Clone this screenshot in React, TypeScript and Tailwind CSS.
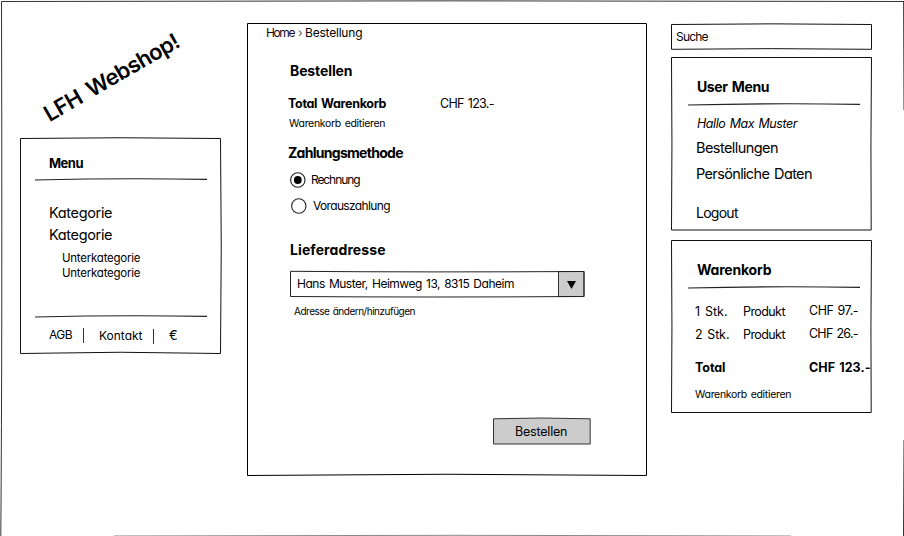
import { useLayoutEffect, useRef, useState } from "react";
import type { ReactNode } from "react";

/** Text whose letter spacing is adjusted so that it spans exactly `width` pixels. */
function Text({ width, className = "", children }: { width: number; className?: string; children: string }) {
  const ref = useRef<HTMLSpanElement>(null);
  const [spacing, setSpacing] = useState(0);
  useLayoutEffect(() => {
    if (ref.current) {
      const gaps = Math.max(children.length - 1, 1);
      setSpacing((width + 0.5 - ref.current.getBoundingClientRect().width) / gaps);
    }
  }, []);
  return (
    <span className={`block h-5 whitespace-pre leading-[22px] [word-spacing:0.1em] ${className}`} style={{ width }}>
      <span ref={ref} className="inline-block" style={{ letterSpacing: spacing }}>
        {children}
      </span>
    </span>
  );
}

/** Sketchy outline laid behind a box's content. */
function Outline({ w, h, d, fill = "none", stroke = "#111" }: { w: number; h: number; d: string; fill?: string; stroke?: string }) {
  return (
    <svg className="pointer-events-none absolute left-0 top-0 overflow-visible" width={w} height={h} aria-hidden="true">
      <path d={d} fill={fill} stroke={stroke} strokeWidth="1" />
    </svg>
  );
}

function Rule({ className = "" }: { className?: string }) {
  return (
    <svg className={`block h-[3px] w-[172px] overflow-visible ${className}`} aria-hidden="true">
      <path d="M0 2 Q86 0 172 1.4" fill="none" stroke="#222" strokeWidth="1.1" />
    </svg>
  );
}

function Radio({ checked = false }: { checked?: boolean }) {
  return (
    <svg className="block size-4 shrink-0" viewBox="0 0 16 16" aria-hidden="true">
      <circle cx="7.8" cy="8" r="7.2" fill="white" stroke="#222" strokeWidth="1.1" />
      {checked && <circle cx="7.8" cy="8" r="3.9" fill="#000" />}
    </svg>
  );
}

function Panel({ className, outline, children }: { className: string; outline: ReactNode; children: ReactNode }) {
  return (
    <section className={`relative flex flex-col ${className}`}>
      {outline}
      {children}
    </section>
  );
}

function CartRow({ amount, amountWidth, price, className }: { amount: string; amountWidth: number; price: string; className: string }) {
  return (
    <div className={`flex pl-6 text-[12.5px] ${className}`}>
      <div className="w-12 pt-px"><Text width={amountWidth}>{amount}</Text></div>
      <div className="w-[66px] pt-px"><Text width={42}>Produkt</Text></div>
      <Text width={49}>{price}</Text>
    </div>
  );
}

export default function App() {
  return (
    <main className="relative flex h-[536px] w-[904px] overflow-hidden bg-white font-['Comic_Sans_MS','Inter','Noto_Sans',sans-serif] text-black [font-feature-settings:'cv11']">
      <Outline w={904} h={536} d="M1.5 1.5 Q452 0.2 904 1.5 M1.5 1.5 Q2.4 330 0.8 536 M903.6 1 L904 110 M904 440 L903.5 536" stroke="#333" />
      <Outline w={904} h={536} d="M114 536 Q452 534.6 791 536" stroke="#888" />

      <aside className="ml-5 flex w-[201px] flex-col">
        <h1 className="ml-[30px] mt-[103px] h-6 w-[150px] origin-[0_20px] -rotate-30 text-[22px] font-semibold">
          <span className="block h-5 whitespace-pre leading-[22px] tracking-[-0.6px] [word-spacing:4px]">LFH Webshop!</span>
        </h1>
        <Panel
          className="mt-[11px] h-[216px] pl-[29px]"
          outline={<Outline w={201} h={216} d="M0.5 0.5 Q100 -1 200.5 0.5 Q202 110 200.5 215.5 Q100 213 0.5 215.5 Z" />}
        >
          <h2 className="mt-[14px] text-[13px] font-bold"><Text width={34}>Menu</Text></h2>
          <Rule className="-ml-3.5 mt-[6px]" />
          <div className="mt-[21px] text-[14.5px]">
            <Text width={63}>Kategorie</Text>
            <Text width={63} className="mt-0.5">Kategorie</Text>
          </div>
          <div className="ml-[13px] mt-[3px] text-[11.5px]">
            <Text width={78}>Unterkategorie</Text>
            <Text width={78} className="-mt-[5px]">Unterkategorie</Text>
          </div>
          <Rule className="-ml-3.5 mt-[33px]" />
          <nav className="mt-1.5 flex text-[12px]">
            <Text width={23}>AGB</Text>
            <span className="ml-[11px] mt-1 h-[15px] w-px bg-[#333]" />
            <Text width={43} className="ml-[15px] mt-px">Kontakt</Text>
            <span className="ml-[11px] mt-[5px] h-[15px] w-px bg-[#333]" />
            <Text width={9} className="ml-[15px] text-[13px]">€</Text>
          </nav>
        </Panel>
      </aside>

      <Panel
        className="ml-[26px] mt-[23px] h-[453px] w-[400px]"
        outline={<Outline w={400} h={453} stroke="#000" d="M0.5 0.5 H399.5 V452.5 Q200 450 0.5 452.5 Z" />}
      >
        <nav className="-mt-px flex pl-[19px] text-[12px]">
          <Text width={29} className="text-[#210621]">Home</Text>
          <Text width={5} className="ml-[3px] text-[12px] text-[#555]">›</Text>
          <Text width={57} className="ml-[2px]">Bestellung</Text>
        </nav>
        <h2 className="ml-[43px] mt-[18px] text-[14px] font-bold"><Text width={62}>Bestellen</Text></h2>
        <div className="ml-[41px] mt-[13px] flex text-[12.5px]">
          <Text width={98} className="font-bold">Total Warenkorb</Text>
          <Text width={54} className="ml-[54px]">CHF 123.-</Text>
        </div>
        <Text width={96} className="ml-[42px] text-[10.5px]">Warenkorb editieren</Text>
        <h2 className="ml-[41px] mt-[9px] text-[14px] font-bold"><Text width={115}>Zahlungsmethode</Text></h2>
        <label className="ml-[43px] mt-[8px] flex items-center text-[12px]">
          <Radio checked />
          <Text width={49} className="-mt-px ml-[5px]">Rechnung</Text>
        </label>
        <label className="ml-11 mt-[7px] flex items-center text-[12px]">
          <Radio />
          <Text width={77} className="-mt-px ml-[6px]">Vorauszahlung</Text>
        </label>
        <h2 className="ml-[43px] mt-6 text-[14px] font-bold"><Text width={95}>Lieferadresse</Text></h2>
        <div className="relative ml-[43px] mt-[12px] flex h-[26px] w-[295px]">
          <Outline w={295} h={26} d="M268.5 0.5 H294 V25.5 H268.5 Z" fill="#ccc" stroke="#333" />
          <Outline w={295} h={26} d="M0.5 0.3 Q140 1.4 294 0.5 V25.5 Q140 26.5 0.5 25.5 Z" stroke="#222" />
          <Text width={217} className="relative ml-[7px] mt-[2px] text-[12px]">Hans Muster, Heimweg 13, 8315 Daheim</Text>
          <svg className="relative ml-[53px] mt-[10px] h-2 w-[9px]" viewBox="0 0 9 8" aria-hidden="true">
            <path d="M0 0H9L4.5 8Z" />
          </svg>
        </div>
        <Text width={121} className="ml-[47px] mt-[3px] text-[10px]">Adresse ändern/hinzufügen</Text>
        <button className="relative ml-[246px] mt-[98px] flex h-[26px] w-[98px] pl-[22px] pt-[3px] text-left text-[12.5px]">
          <Outline w={98} h={26} d="M0.5 0.8 Q48 -0.8 97.2 0.8 V26 H0.5 Z" fill="#ccc" stroke="#333" />
          <Text width={52} className="relative">Bestellen</Text>
        </button>
      </Panel>

      <aside className="ml-6 flex w-[201px] flex-col pt-6">
        <div className="relative h-[26px] pl-[5px] pt-[2px] text-[12px]">
          <Outline w={201} h={26} d="M0.5 0.5 Q100 -0.8 200.5 0.5 V25.3 Q100 24 0.5 25.3 Z" />
          <Text width={32}>Suche</Text>
        </div>
        <Panel
          className="mt-[7px] h-[174px] pl-[25px]"
          outline={<Outline w={201} h={174} d="M0.5 0.5 H200.5 Q199.5 87 200.2 173 H0.5 Q1.4 87 0.5 0.5 Z" />}
        >
          <h2 className="ml-px mt-[19px] text-[14px] font-bold"><Text width={72}>User Menu</Text></h2>
          <Rule className="-ml-2 mt-[7px]" />
          <Text width={100} className="ml-px mt-[7px] text-[12.5px] italic">Hallo Max Muster</Text>
          <Text width={82} className="mt-1 text-[14.5px]">Bestellungen</Text>
          <Text width={116} className="mt-1.5 text-[14.5px]">Persönliche Daten</Text>
          <Text width={42} className="mt-[19px] text-[14px]">Logout</Text>
        </Panel>
        <Panel
          className="mt-[9px] h-[173px]"
          outline={<Outline w={201} h={173} d="M0.5 0.5 H200.5 Q199.5 87 200.2 172.5 H0.5 Q1.4 87 0.5 0.5 Z" />}
        >
          <h2 className="ml-[26px] mt-[19px] text-[14px] font-bold"><Text width={74}>Warenkorb</Text></h2>
          <Rule className="ml-[17px] mt-[7px]" />
          <CartRow amount="1 Stk." amountWidth={32} price="CHF 97.-" className="mt-[11px]" />
          <CartRow amount="2 Stk." amountWidth={34} price="CHF 26.-" className="mt-[2px]" />
          <div className="mt-[13px] flex pl-6 text-[12.5px] font-bold">
            <Text width={30}>Total</Text>
            <Text width={61} className="ml-[84px]">CHF 123.-</Text>
          </div>
          <Text width={96} className="ml-6 mt-[7px] text-[10.5px]">Warenkorb editieren</Text>
        </Panel>
      </aside>
    </main>
  );
}
